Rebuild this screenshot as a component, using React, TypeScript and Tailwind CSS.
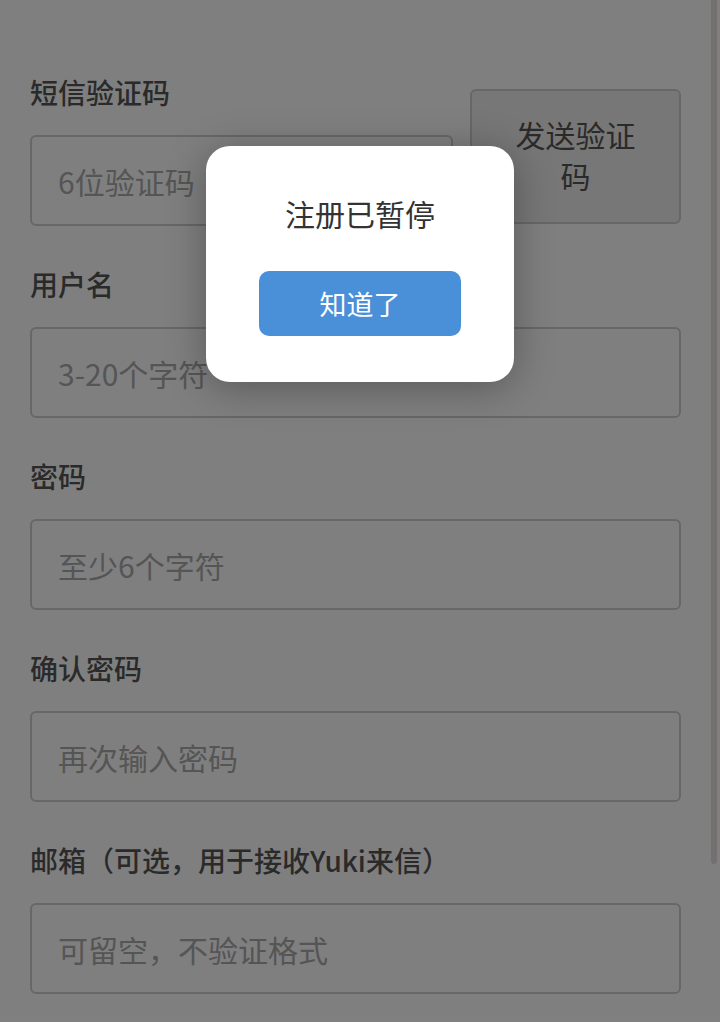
import React from 'react';

const fields = [
  { label: '用户名', placeholder: '3-20个字符' },
  { label: '密码', placeholder: '至少6个字符' },
  { label: '确认密码', placeholder: '再次输入密码' },
  { label: '邮箱（可选，用于接收Yuki来信）', placeholder: '可留空，不验证格式' },
];

const Label = ({ children }: { children: React.ReactNode }) => (
  <div className="text-[28px] leading-[42px] font-medium text-[#555] mb-[22px]">{children}</div>
);

const Input = ({ placeholder }: { placeholder: string }) => (
  <input
    placeholder={placeholder}
    className="block w-full h-[91px] rounded-[6px] border-2 border-[#cfcfcf] bg-white px-[26px] text-[30px] text-[#333] placeholder:text-[#aaa] outline-none"
  />
);

export default function App() {
  return (
    <div
      className="relative h-[1022px] w-[720px] overflow-hidden bg-white"
      style={{ fontFamily: '"Noto Sans CJK SC", "Noto Sans", sans-serif' }}
    >
      {/* page */}
      <div className="pt-[71px] pl-[30px] pr-[39px] flex flex-col gap-[37px]">
        <div className="flex items-end gap-[17px]">
          <div className="flex-1">
            <Label>短信验证码</Label>
            <Input placeholder="6位验证码" />
          </div>
          <button className="w-[211px] h-[135px] mb-[2px] rounded-[6px] border-2 border-[#cfcfcf] bg-[#eeeeee] text-[30px] leading-[41px] text-[#555] px-[40px] pb-[4px]">
            发送验证码
          </button>
        </div>
        {fields.map((f) => (
          <div key={f.label}>
            <Label>{f.label}</Label>
            <Input placeholder={f.placeholder} />
          </div>
        ))}
      </div>

      {/* scrollbar thumb */}
      <div className="absolute right-[3px] top-0 w-[6px] h-[864px] rounded-b-[3px] bg-[#e6e1df]" />

      {/* overlay */}
      <div className="absolute inset-0 bg-black/50 flex justify-center items-start pt-[146px]">
        <div className="w-[308px] rounded-[24px] bg-white pt-[45px] pb-[46px] flex flex-col items-center shadow-[0_6px_40px_rgba(0,0,0,0.3)]">
          <div className="text-[30px] leading-[45px] text-[#333]">注册已暂停</div>
          <button className="mt-[35px] w-[202px] h-[65px] rounded-[10px] bg-[#4a90d9] text-white text-[27px] leading-[42px]">
            知道了
          </button>
        </div>
      </div>
    </div>
  );
}
